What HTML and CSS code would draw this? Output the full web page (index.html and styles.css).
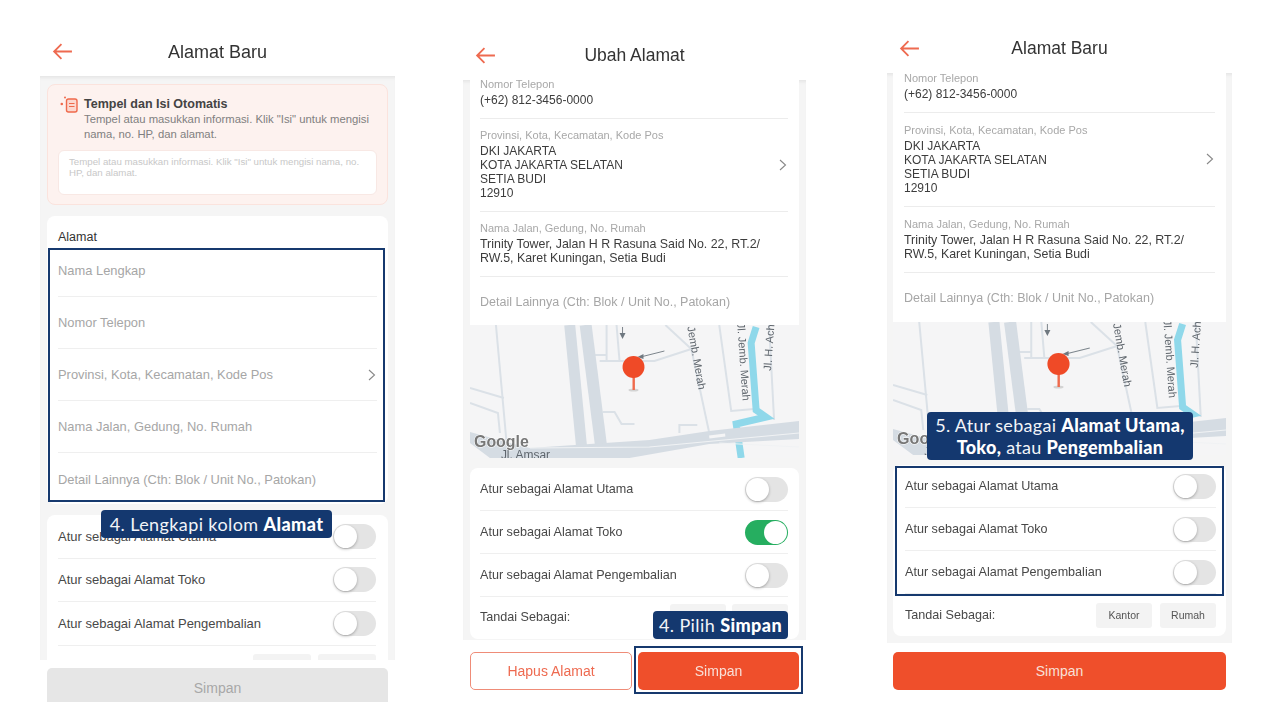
FILE: index.html
```html
<!DOCTYPE html>
<html lang="id">
<head>
  <meta charset="UTF-8">
  <title>Alamat</title>
  <link rel="stylesheet" href="styles.css">
</head>
<body>
  <!-- Peta dipakai layar 2 dan 3 -->
  <svg class="defs" width="0" height="0">
    <symbol id="map" viewBox="0 0 330 133" preserveAspectRatio="none">
      <rect width="330" height="133" fill="#f5f5f6"/>
      <g fill="none" stroke="#dbe1e7" stroke-width="2">
        <path d="M26 0 L38 132"/>
        <path d="M0 63 L34 73 M0 78 L28 88 L30 108"/>
        <path d="M130 36 H185 L222 24"/>
        <path d="M137 36 V0 M150 36 L147 0 M137 30 L116 30 V0"/>
        <path d="M196 0 L222 24"/>
        <path d="M222 24 L240 108"/>
        <path d="M250 0 L262 86 L285 84"/>
        <path d="M300 0 L305 95"/>
        <path d="M133 87 H145 L152 99 H165"/>
        <path d="M210 108 V100 H228"/>
      </g>
      <path d="M100 0 L113 133" fill="none" stroke="#d5dce3" stroke-width="11"/>
      <path d="M116 0 L133 133" fill="none" stroke="#d5dce3" stroke-width="12"/>
      <path d="M287 2 L282 18 L287 85 L297 92 L267 99 L272 133" fill="none" stroke="#8fd8ea" stroke-width="7"/>
      <path d="M0 107 L40 118 L60 123 L180 115 L240 106 L330 96 V114 L240 119 L160 133 H20 L0 118 Z" fill="#d5dce3"/>
      <path d="M60 123 L180 122 L330 108 M250 118 L330 122" fill="none" stroke="#f0f2f4" stroke-width="1.2"/>
      <path d="M240 112 L256 110" stroke="#f5f5f6" stroke-width="3"/>
      <g class="map-label">
        <text transform="translate(218 2) rotate(80)">Jemb. Merah</text>
        <text transform="translate(268 -2) rotate(86)">Jl. Jemb. Merah</text>
        <text transform="translate(302 46) rotate(-86)">Jl. H. Achmad</text>
        <text class="map-street" x="31" y="134">Jl. Amsar</text>
      </g>
      <path d="M153 2 V12 M195 26 L171 32" stroke="#7c858c" stroke-width="1" fill="none"/>
      <path d="M153 14 L150 8 H156 Z M168 32 L174 29 V34 Z" fill="#6f7880"/>
      <text class="map-google" x="4" y="122">Google</text>
      <ellipse cx="164" cy="65" rx="5" ry="1.5" fill="#d3d3d3"/>
      <rect x="163" y="50" width="2.4" height="15" fill="#ef6a4c"/>
      <circle cx="164" cy="42" r="11" fill="#ef4a27"/>
    </symbol>
  </svg>

  <div class="stage">

    <!-- Layar 1 -->
    <section class="phone phone-a">
      <header class="topbar">
        <svg class="back" viewBox="0 0 20 16"><path d="M19 8H2M9 1L2 8l7 7"/></svg>
        <h1>Alamat Baru</h1>
      </header>
      <div class="scroll">
        <div class="paste-card">
          <div class="paste-head">
            <svg class="paste-icon" viewBox="0 0 18 17" fill="none" stroke="#ef6a4c">
              <rect x="6.5" y="3" width="10.5" height="13" rx="2" stroke-width="1.4" fill="#fbd9d0"/>
              <path d="M9 7.5h5.5M9 10.5h5.5" stroke-width="1.2"/>
              <circle cx="1.8" cy="8" r="1.3" fill="#ef6a4c" stroke="none"/>
              <circle cx="5" cy="1.5" r="1" fill="#ef6a4c" stroke="none"/>
            </svg>
            <div>
              <h2>Tempel dan Isi Otomatis</h2>
              <p>Tempel atau masukkan informasi. Klik "Isi" untuk mengisi nama, no. HP, dan alamat.</p>
            </div>
          </div>
          <div class="paste-input">Tempel atau masukkan informasi. Klik "Isi" untuk mengisi nama, no. HP, dan alamat.</div>
        </div>
        <div class="card card-address">
          <h3>Alamat</h3>
          <div class="ph-row">Nama Lengkap</div>
          <div class="ph-row">Nomor Telepon</div>
          <div class="ph-row">Provinsi, Kota, Kecamatan, Kode Pos
            <svg class="chevron" viewBox="0 0 8 12"><path d="M1 1l5.5 5L1 11"/></svg>
          </div>
          <div class="ph-row">Nama Jalan, Gedung, No. Rumah</div>
          <div class="ph-row">Detail Lainnya (Cth: Blok / Unit No., Patokan)</div>
        </div>
        <div class="card card-toggles">
          <div class="toggle-row">Atur sebagai Alamat Utama<span class="switch"></span></div>
          <div class="toggle-row">Atur sebagai Alamat Toko<span class="switch"></span></div>
          <div class="toggle-row">Atur sebagai Alamat Pengembalian<span class="switch"></span></div>
          <div class="tag-row"><span class="tags"><span class="tag"></span><span class="tag"></span></span></div>
        </div>
      </div>
      <footer class="footer">
        <button class="btn btn-off">Simpan</button>
      </footer>
      <div class="mark mark-a1"></div>
      <div class="callout callout-a">4. Lengkapi kolom <b>Alamat</b></div>
    </section>

    <!-- Layar 2 -->
    <section class="phone phone-b">
      <header class="topbar">
        <svg class="back" viewBox="0 0 20 16"><path d="M19 8H2M9 1L2 8l7 7"/></svg>
        <h1>Ubah Alamat</h1>
      </header>
      <div class="scroll">
        <div class="card card-filled">
          <div class="field">
            <label>Nomor Telepon</label>
            <div class="value">(+62) 812-3456-0000</div>
          </div>
          <div class="field">
            <label>Provinsi, Kota, Kecamatan, Kode Pos</label>
            <div class="value">DKI JAKARTA<br>KOTA JAKARTA SELATAN<br>SETIA BUDI<br>12910</div>
            <svg class="chevron" viewBox="0 0 8 12"><path d="M1 1l5.5 5L1 11"/></svg>
          </div>
          <div class="field">
            <label>Nama Jalan, Gedung, No. Rumah</label>
            <div class="value value-long">Trinity Tower, Jalan H R Rasuna Said No. 22, RT.2/<br>RW.5, Karet Kuningan, Setia Budi</div>
          </div>
          <div class="field-empty">Detail Lainnya (Cth: Blok / Unit No., Patokan)</div>
        </div>
        <svg class="map"><use href="#map"/></svg>
        <div class="card card-toggles">
          <div class="toggle-row">Atur sebagai Alamat Utama<span class="switch"></span></div>
          <div class="toggle-row">Atur sebagai Alamat Toko<span class="switch on"></span></div>
          <div class="toggle-row">Atur sebagai Alamat Pengembalian<span class="switch"></span></div>
          <div class="tag-row">Tandai Sebagai:<span class="tags"><span class="tag">Kantor</span><span class="tag">Rumah</span></span></div>
        </div>
      </div>
      <footer class="footer footer-split">
        <button class="btn btn-outline">Hapus Alamat</button>
        <button class="btn btn-main">Simpan</button>
      </footer>
      <div class="mark mark-b1"></div>
      <div class="callout callout-b">4. Pilih <b>Simpan</b></div>
    </section>

    <!-- Layar 3 -->
    <section class="phone phone-c">
      <header class="topbar">
        <svg class="back" viewBox="0 0 20 16"><path d="M19 8H2M9 1L2 8l7 7"/></svg>
        <h1>Alamat Baru</h1>
      </header>
      <div class="scroll">
        <div class="card card-filled">
          <div class="field">
            <label>Nomor Telepon</label>
            <div class="value">(+62) 812-3456-0000</div>
          </div>
          <div class="field">
            <label>Provinsi, Kota, Kecamatan, Kode Pos</label>
            <div class="value">DKI JAKARTA<br>KOTA JAKARTA SELATAN<br>SETIA BUDI<br>12910</div>
            <svg class="chevron" viewBox="0 0 8 12"><path d="M1 1l5.5 5L1 11"/></svg>
          </div>
          <div class="field">
            <label>Nama Jalan, Gedung, No. Rumah</label>
            <div class="value value-long">Trinity Tower, Jalan H R Rasuna Said No. 22, RT.2/<br>RW.5, Karet Kuningan, Setia Budi</div>
          </div>
          <div class="field-empty">Detail Lainnya (Cth: Blok / Unit No., Patokan)</div>
        </div>
        <svg class="map"><use href="#map"/></svg>
        <div class="card card-toggles">
          <div class="toggle-row">Atur sebagai Alamat Utama<span class="switch"></span></div>
          <div class="toggle-row">Atur sebagai Alamat Toko<span class="switch"></span></div>
          <div class="toggle-row">Atur sebagai Alamat Pengembalian<span class="switch"></span></div>
          <div class="tag-row">Tandai Sebagai:<span class="tags"><span class="tag">Kantor</span><span class="tag">Rumah</span></span></div>
        </div>
      </div>
      <footer class="footer">
        <button class="btn btn-main">Simpan</button>
      </footer>
      <div class="mark mark-c1"></div>
      <div class="callout callout-c">5. Atur sebagai <b>Alamat Utama,</b><br><b>Toko,</b> atau <b>Pengembalian</b></div>
    </section>

  </div>
</body>
</html>
```

FILE: styles.css
```css
* { margin:0; padding:0; box-sizing:border-box; }
html, body {
  width:100%; height:100%;
  background:#fff;
  overflow:hidden;
  font-family:"Liberation Sans", Arial, sans-serif;
  color:#444;
}
.defs { position:absolute; }
.stage {
  display:flex; align-items:flex-start;
  height:720px;
  filter:blur(.4px);
}

/* Telas */
.phone { position:relative; display:flex; flex-direction:column; }
.phone-a { width:355px; margin-left:40px; margin-top:30px; height:672px; }
.phone-b { width:343px; margin-left:68px; margin-top:30px; height:672px; }
.phone-c { width:345px; margin-left:81px; margin-top:24px; height:672px; }

.topbar {
  position:relative;
  display:flex; align-items:center; justify-content:center;
  flex:none;
}
.phone-a .topbar { height:46px; padding-bottom:2px; }
.phone-b .topbar { height:50px; }
.phone-c .topbar { height:49px; }
.topbar h1 {
  font-size:17.5px; font-weight:400; color:#333;
}
.phone-a .topbar h1 { font-size:18px; }
.back {
  position:absolute; left:12px; top:50%;
  width:21px; height:17px; margin-top:-9px;
  fill:none; stroke:#ee6a50; stroke-width:1.7;
}
.phone-a .back { margin-top:-10px; }
.phone-b .back { margin-top:-8px; }

.scroll {
  background:#f5f5f5;
  overflow:hidden;
  flex:none;
  box-shadow:inset 0 4px 3px -2px #e6e6e6;
}
.phone-a .scroll { height:584px; padding:8px 7px 0; }
.phone-b .scroll { height:560px; padding:0 7px; }
.phone-c .scroll { height:570px; padding:0 6px; }

.card { background:#fff; border-radius:8px; }

/* Tempel */
.paste-card {
  height:121px;
  background:#fdf2ef;
  border:1px solid #fbe3dd;
  border-radius:8px;
  padding:12px 10px 0;
}
.paste-head { display:flex; gap:6px; }
.paste-icon { width:18px; height:17px; margin-left:2px; margin-top:-1px; flex:none; }
.paste-card h2 { font-size:12.5px; color:#444; line-height:15px; }
.paste-card p { font-size:11.3px; line-height:15px; color:#808080; width:296px; }
.paste-input {
  height:45px; margin-top:8px;
  background:#fff;
  border:1px solid #f8e8e4;
  border-radius:6px;
  padding:5px 10px;
  font-size:9.7px; line-height:11px; color:#c8c8c8;
}

/* Alamat */
.card-address { margin-top:11px; height:288px; padding:14px 11px 0; }
.card-address h3 { font-size:12.5px; font-weight:400; color:#333; line-height:15px; }
.ph-row {
  height:52px;
  display:flex; align-items:center; justify-content:space-between;
  font-size:12.9px; color:#a6a6a6;
  border-bottom:1px solid #efefef;
}
.ph-row:last-child { border-bottom:0; }
.chevron { width:8px; height:12px; fill:none; stroke:#888; stroke-width:1.1; }
.ph-row .chevron { margin-right:1px; }

/* Campos preenchidos */
.card-filled { padding:0 11px; border-radius:0; }
.field {
  position:relative;
  padding:9px 0 11px;
  border-bottom:1px solid #ececec;
}
.field label { display:block; font-size:11px; line-height:14px; color:#a8a8a8; }
.field .value { margin-top:2px; font-size:12px; line-height:14px; color:#3c3c3c; }
.field .value-long { font-size:12.4px; }
.field .chevron { position:absolute; right:1px; top:40px; }
.field-empty {
  height:49px;
  display:flex; align-items:center;
  font-size:12.5px; color:#a6a6a6;
}
.field:first-child { padding-top:0; }
.phone-b .card-filled { height:248px; margin-top:-3px; padding-left:10px; }
.phone-c .card-filled { height:251px; margin-top:-2px; }
.phone-c .field { padding-top:10px; }
.phone-c .field:first-child { padding-top:0; }
.phone-c .field-empty { height:50px; }

.map { display:block; width:100%; height:133px; }
.map-label text { font:11px "Liberation Sans", sans-serif; fill:#5f666d; }
.map-label .map-street { font-size:12px; }
.map-google {
  font:bold 16px "Liberation Sans", sans-serif;
  fill:#777; stroke:#fff; stroke-width:1; paint-order:stroke;
}

/* Opções */
.card-toggles { padding:0 11px 0 10px; margin-top:10px; }
.phone-b .card-toggles { padding-bottom:3px; }
.phone-c .card-toggles { padding:0 10px 0 12px; }
.phone-a .card-toggles { margin-top:11px; padding:0 12px 0 11px; }
.phone-a .toggle-row { height:43.5px; font-size:13px; }
.toggle-row {
  height:43px;
  display:flex; align-items:center; justify-content:space-between;
  font-size:12.6px; color:#484848;
  border-bottom:1px solid #efefef;
}
.switch {
  position:relative;
  width:43px; height:25px;
  background:#e4e4e4;
  border-radius:13px;
}
.switch::after {
  content:"";
  position:absolute; left:1px; top:1px;
  width:23px; height:23px;
  background:#fff;
  border-radius:50%;
  box-shadow:0 1px 3px rgba(0,0,0,.3);
}
.switch.on { background:#26ae60; }
.switch.on::after { left:19px; box-shadow:none; }

.tag-row {
  height:42px;
  display:flex; align-items:center; justify-content:space-between;
  font-size:12.6px; color:#484848;
}
.phone-a .tag-row { justify-content:flex-end; }
.phone-b .tag-row { height:39px; }
.tags { display:flex; gap:8px; }
.phone-a .tags { gap:7px; }
.phone-b .tags { gap:6px; }
.tag {
  width:56px; height:25px;
  display:flex; align-items:center; justify-content:center;
  background:#f3f3f3; border-radius:3px;
  font-size:10.5px; color:#555;
}
.phone-a .tag { width:58px; }

/* Rodapé */
.footer { flex:none; background:#fff; overflow:hidden; }
.phone-a .footer { height:42px; padding:8px 7px 0; }
.phone-b .footer { padding:12px 7px 0; display:flex; gap:6px; }
.phone-c .footer { padding:9px 6px 0; }
.btn {
  display:block; width:100%;
  height:38px;
  border:0; border-radius:5px;
  font:14px "Liberation Sans", sans-serif;
}
.btn-off { height:40px; background:#e6e6e6; color:#a8a8a8; }
.btn-main { background:#ef4f2b; color:#f8e0d8; }
.btn-outline { background:#fff; color:#ee6a50; border:1px solid #ef8c78; }

/* Destaques por cima */
.mark { position:absolute; border:2px solid #16396e; }
.mark-a1 { left:8px; top:218px; width:337px; height:254px; }
.mark-b1 { left:171px; top:616px; width:169px; height:48px; }
.mark-c1 { left:8px; top:442px; width:329px; height:130px; }

.callout {
  position:absolute;
  background:#14386f;
  color:#f2f4f8;
  border-radius:4px;
  font-family:Lato, sans-serif;
  font-size:18px;
  letter-spacing:.4px;
  text-align:center;
  white-space:nowrap;
}
.callout b { font-weight:900; color:#fff; }
.callout-a { left:61px; top:480px; width:231px; height:28px; line-height:28px; }
.callout-b { left:190px; top:581px; width:135px; height:28px; line-height:28px; }
.callout-c { left:40px; top:388px; width:266px; height:48px; line-height:22px; padding-top:2px; letter-spacing:.3px; }
```
